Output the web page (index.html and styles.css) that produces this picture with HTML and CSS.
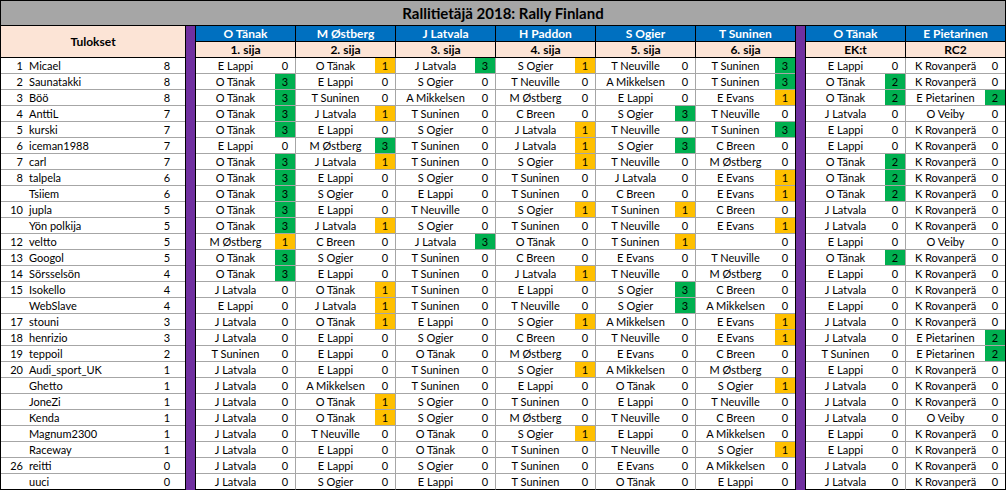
FILE: index.html
```html
<!DOCTYPE html>
<html lang="fi">
<head>
<meta charset="utf-8">
<title>Rallitietäjä 2018: Rally Finland</title>
<link rel="stylesheet" href="styles.css">
</head>
<body>
<div class="sheet">
  <div class="title">Rallitietäjä 2018: Rally Finland</div>
  <div class="grid">
    <div class="pu pu1"></div>
    <div class="pu pu2"></div>
    <div class="r h1">
      <div class="th">Tulokset</div>
      <div class="hb">O Tänak</div>
      <div class="hb">M Østberg</div>
      <div class="hb">J Latvala</div>
      <div class="hb">H Paddon</div>
      <div class="hb">S Ogier</div>
      <div class="hb">T Suninen</div>
      <div class="hb">O Tänak</div>
      <div class="hb">E Pietarinen</div>
    </div>
    <div class="r h2">
      <div class="hp">1. sija</div>
      <div class="hp">2. sija</div>
      <div class="hp">3. sija</div>
      <div class="hp">4. sija</div>
      <div class="hp">5. sija</div>
      <div class="hp">6. sija</div>
      <div class="hp">EK:t</div>
      <div class="hp">RC2</div>
    </div>

    <div class="r"><div class="t"><span class="rk">1</span><span class="nm">Micael</span><span class="pt">8</span></div>
      <div class="c"><span class="n">E Lappi</span><span class="s">0</span></div>
      <div class="c"><span class="n">O Tänak</span><span class="s o">1</span></div>
      <div class="c"><span class="n">J Latvala</span><span class="s g">3</span></div>
      <div class="c"><span class="n">S Ogier</span><span class="s o">1</span></div>
      <div class="c"><span class="n">T Neuville</span><span class="s">0</span></div>
      <div class="c"><span class="n">T Suninen</span><span class="s g">3</span></div>
      <div class="c"><span class="n">E Lappi</span><span class="s">0</span></div>
      <div class="c"><span class="n">K Rovanperä</span><span class="s">0</span></div>
    </div>
    <div class="r"><div class="t"><span class="rk">2</span><span class="nm">Saunatakki</span><span class="pt">8</span></div>
      <div class="c"><span class="n">O Tänak</span><span class="s g">3</span></div>
      <div class="c"><span class="n">E Lappi</span><span class="s">0</span></div>
      <div class="c"><span class="n">S Ogier</span><span class="s">0</span></div>
      <div class="c"><span class="n">T Neuville</span><span class="s">0</span></div>
      <div class="c"><span class="n">A Mikkelsen</span><span class="s">0</span></div>
      <div class="c"><span class="n">T Suninen</span><span class="s g">3</span></div>
      <div class="c"><span class="n">O Tänak</span><span class="s g">2</span></div>
      <div class="c"><span class="n">K Rovanperä</span><span class="s">0</span></div>
    </div>
    <div class="r"><div class="t"><span class="rk">3</span><span class="nm">Böö</span><span class="pt">8</span></div>
      <div class="c"><span class="n">O Tänak</span><span class="s g">3</span></div>
      <div class="c"><span class="n">T Suninen</span><span class="s">0</span></div>
      <div class="c"><span class="n">A Mikkelsen</span><span class="s">0</span></div>
      <div class="c"><span class="n">M Østberg</span><span class="s">0</span></div>
      <div class="c"><span class="n">E Lappi</span><span class="s">0</span></div>
      <div class="c"><span class="n">E Evans</span><span class="s o">1</span></div>
      <div class="c"><span class="n">O Tänak</span><span class="s g">2</span></div>
      <div class="c"><span class="n">E Pietarinen</span><span class="s g">2</span></div>
    </div>
    <div class="r"><div class="t"><span class="rk">4</span><span class="nm">AnttiL</span><span class="pt">7</span></div>
      <div class="c"><span class="n">O Tänak</span><span class="s g">3</span></div>
      <div class="c"><span class="n">J Latvala</span><span class="s o">1</span></div>
      <div class="c"><span class="n">T Suninen</span><span class="s">0</span></div>
      <div class="c"><span class="n">C Breen</span><span class="s">0</span></div>
      <div class="c"><span class="n">S Ogier</span><span class="s g">3</span></div>
      <div class="c"><span class="n">T Neuville</span><span class="s">0</span></div>
      <div class="c"><span class="n">J Latvala</span><span class="s">0</span></div>
      <div class="c"><span class="n">O Veiby</span><span class="s">0</span></div>
    </div>
    <div class="r"><div class="t"><span class="rk">5</span><span class="nm">kurski</span><span class="pt">7</span></div>
      <div class="c"><span class="n">O Tänak</span><span class="s g">3</span></div>
      <div class="c"><span class="n">E Lappi</span><span class="s">0</span></div>
      <div class="c"><span class="n">S Ogier</span><span class="s">0</span></div>
      <div class="c"><span class="n">J Latvala</span><span class="s o">1</span></div>
      <div class="c"><span class="n">T Neuville</span><span class="s">0</span></div>
      <div class="c"><span class="n">T Suninen</span><span class="s g">3</span></div>
      <div class="c"><span class="n">E Lappi</span><span class="s">0</span></div>
      <div class="c"><span class="n">K Rovanperä</span><span class="s">0</span></div>
    </div>
    <div class="r"><div class="t"><span class="rk">6</span><span class="nm">iceman1988</span><span class="pt">7</span></div>
      <div class="c"><span class="n">E Lappi</span><span class="s">0</span></div>
      <div class="c"><span class="n">M Østberg</span><span class="s g">3</span></div>
      <div class="c"><span class="n">T Suninen</span><span class="s">0</span></div>
      <div class="c"><span class="n">J Latvala</span><span class="s o">1</span></div>
      <div class="c"><span class="n">S Ogier</span><span class="s g">3</span></div>
      <div class="c"><span class="n">C Breen</span><span class="s">0</span></div>
      <div class="c"><span class="n">E Lappi</span><span class="s">0</span></div>
      <div class="c"><span class="n">K Rovanperä</span><span class="s">0</span></div>
    </div>
    <div class="r"><div class="t"><span class="rk">7</span><span class="nm">carl</span><span class="pt">7</span></div>
      <div class="c"><span class="n">O Tänak</span><span class="s g">3</span></div>
      <div class="c"><span class="n">J Latvala</span><span class="s o">1</span></div>
      <div class="c"><span class="n">T Suninen</span><span class="s">0</span></div>
      <div class="c"><span class="n">S Ogier</span><span class="s o">1</span></div>
      <div class="c"><span class="n">T Neuville</span><span class="s">0</span></div>
      <div class="c"><span class="n">M Østberg</span><span class="s">0</span></div>
      <div class="c"><span class="n">O Tänak</span><span class="s g">2</span></div>
      <div class="c"><span class="n">K Rovanperä</span><span class="s">0</span></div>
    </div>
    <div class="r"><div class="t"><span class="rk">8</span><span class="nm">talpela</span><span class="pt">6</span></div>
      <div class="c"><span class="n">O Tänak</span><span class="s g">3</span></div>
      <div class="c"><span class="n">E Lappi</span><span class="s">0</span></div>
      <div class="c"><span class="n">S Ogier</span><span class="s">0</span></div>
      <div class="c"><span class="n">T Suninen</span><span class="s">0</span></div>
      <div class="c"><span class="n">J Latvala</span><span class="s">0</span></div>
      <div class="c"><span class="n">E Evans</span><span class="s o">1</span></div>
      <div class="c"><span class="n">O Tänak</span><span class="s g">2</span></div>
      <div class="c"><span class="n">K Rovanperä</span><span class="s">0</span></div>
    </div>
    <div class="r"><div class="t"><span class="rk"></span><span class="nm">Tsiiem</span><span class="pt">6</span></div>
      <div class="c"><span class="n">O Tänak</span><span class="s g">3</span></div>
      <div class="c"><span class="n">S Ogier</span><span class="s">0</span></div>
      <div class="c"><span class="n">E Lappi</span><span class="s">0</span></div>
      <div class="c"><span class="n">T Suninen</span><span class="s">0</span></div>
      <div class="c"><span class="n">C Breen</span><span class="s">0</span></div>
      <div class="c"><span class="n">E Evans</span><span class="s o">1</span></div>
      <div class="c"><span class="n">O Tänak</span><span class="s g">2</span></div>
      <div class="c"><span class="n">K Rovanperä</span><span class="s">0</span></div>
    </div>
    <div class="r"><div class="t"><span class="rk">10</span><span class="nm">jupla</span><span class="pt">5</span></div>
      <div class="c"><span class="n">O Tänak</span><span class="s g">3</span></div>
      <div class="c"><span class="n">E Lappi</span><span class="s">0</span></div>
      <div class="c"><span class="n">T Neuville</span><span class="s">0</span></div>
      <div class="c"><span class="n">S Ogier</span><span class="s o">1</span></div>
      <div class="c"><span class="n">T Suninen</span><span class="s o">1</span></div>
      <div class="c"><span class="n">C Breen</span><span class="s">0</span></div>
      <div class="c"><span class="n">J Latvala</span><span class="s">0</span></div>
      <div class="c"><span class="n">K Rovanperä</span><span class="s">0</span></div>
    </div>
    <div class="r"><div class="t"><span class="rk"></span><span class="nm">Yön polkija</span><span class="pt">5</span></div>
      <div class="c"><span class="n">O Tänak</span><span class="s g">3</span></div>
      <div class="c"><span class="n">J Latvala</span><span class="s o">1</span></div>
      <div class="c"><span class="n">S Ogier</span><span class="s">0</span></div>
      <div class="c"><span class="n">T Suninen</span><span class="s">0</span></div>
      <div class="c"><span class="n">T Neuville</span><span class="s">0</span></div>
      <div class="c"><span class="n">E Evans</span><span class="s o">1</span></div>
      <div class="c"><span class="n">J Latvala</span><span class="s">0</span></div>
      <div class="c"><span class="n">K Rovanperä</span><span class="s">0</span></div>
    </div>
    <div class="r"><div class="t"><span class="rk">12</span><span class="nm">veltto</span><span class="pt">5</span></div>
      <div class="c"><span class="n">M Østberg</span><span class="s o">1</span></div>
      <div class="c"><span class="n">C Breen</span><span class="s">0</span></div>
      <div class="c"><span class="n">J Latvala</span><span class="s g">3</span></div>
      <div class="c"><span class="n">O Tänak</span><span class="s">0</span></div>
      <div class="c"><span class="n">T Suninen</span><span class="s o">1</span></div>
      <div class="c"><span class="n"></span><span class="s">0</span></div>
      <div class="c"><span class="n">E Lappi</span><span class="s">0</span></div>
      <div class="c"><span class="n">O Veiby</span><span class="s">0</span></div>
    </div>
    <div class="r"><div class="t"><span class="rk">13</span><span class="nm">Googol</span><span class="pt">5</span></div>
      <div class="c"><span class="n">O Tänak</span><span class="s g">3</span></div>
      <div class="c"><span class="n">S Ogier</span><span class="s">0</span></div>
      <div class="c"><span class="n">T Suninen</span><span class="s">0</span></div>
      <div class="c"><span class="n">C Breen</span><span class="s">0</span></div>
      <div class="c"><span class="n">E Evans</span><span class="s">0</span></div>
      <div class="c"><span class="n">T Neuville</span><span class="s">0</span></div>
      <div class="c"><span class="n">O Tänak</span><span class="s g">2</span></div>
      <div class="c"><span class="n">K Rovanperä</span><span class="s">0</span></div>
    </div>
    <div class="r"><div class="t"><span class="rk">14</span><span class="nm">Sörsselsön</span><span class="pt">4</span></div>
      <div class="c"><span class="n">O Tänak</span><span class="s g">3</span></div>
      <div class="c"><span class="n">E Lappi</span><span class="s">0</span></div>
      <div class="c"><span class="n">T Suninen</span><span class="s">0</span></div>
      <div class="c"><span class="n">J Latvala</span><span class="s o">1</span></div>
      <div class="c"><span class="n">T Neuville</span><span class="s">0</span></div>
      <div class="c"><span class="n">M Østberg</span><span class="s">0</span></div>
      <div class="c"><span class="n">E Lappi</span><span class="s">0</span></div>
      <div class="c"><span class="n">K Rovanperä</span><span class="s">0</span></div>
    </div>
    <div class="r"><div class="t"><span class="rk">15</span><span class="nm">Isokello</span><span class="pt">4</span></div>
      <div class="c"><span class="n">J Latvala</span><span class="s">0</span></div>
      <div class="c"><span class="n">O Tänak</span><span class="s o">1</span></div>
      <div class="c"><span class="n">T Suninen</span><span class="s">0</span></div>
      <div class="c"><span class="n">E Lappi</span><span class="s">0</span></div>
      <div class="c"><span class="n">S Ogier</span><span class="s g">3</span></div>
      <div class="c"><span class="n">C Breen</span><span class="s">0</span></div>
      <div class="c"><span class="n">J Latvala</span><span class="s">0</span></div>
      <div class="c"><span class="n">K Rovanperä</span><span class="s">0</span></div>
    </div>
    <div class="r"><div class="t"><span class="rk"></span><span class="nm">WebSlave</span><span class="pt">4</span></div>
      <div class="c"><span class="n">E Lappi</span><span class="s">0</span></div>
      <div class="c"><span class="n">J Latvala</span><span class="s o">1</span></div>
      <div class="c"><span class="n">T Suninen</span><span class="s">0</span></div>
      <div class="c"><span class="n">T Neuville</span><span class="s">0</span></div>
      <div class="c"><span class="n">S Ogier</span><span class="s g">3</span></div>
      <div class="c"><span class="n">A Mikkelsen</span><span class="s">0</span></div>
      <div class="c"><span class="n">E Lappi</span><span class="s">0</span></div>
      <div class="c"><span class="n">K Rovanperä</span><span class="s">0</span></div>
    </div>
    <div class="r"><div class="t"><span class="rk">17</span><span class="nm">stouni</span><span class="pt">3</span></div>
      <div class="c"><span class="n">J Latvala</span><span class="s">0</span></div>
      <div class="c"><span class="n">O Tänak</span><span class="s o">1</span></div>
      <div class="c"><span class="n">E Lappi</span><span class="s">0</span></div>
      <div class="c"><span class="n">S Ogier</span><span class="s o">1</span></div>
      <div class="c"><span class="n">A Mikkelsen</span><span class="s">0</span></div>
      <div class="c"><span class="n">E Evans</span><span class="s o">1</span></div>
      <div class="c"><span class="n">J Latvala</span><span class="s">0</span></div>
      <div class="c"><span class="n">K Rovanperä</span><span class="s">0</span></div>
    </div>
    <div class="r"><div class="t"><span class="rk">18</span><span class="nm">henrizio</span><span class="pt">3</span></div>
      <div class="c"><span class="n">J Latvala</span><span class="s">0</span></div>
      <div class="c"><span class="n">E Lappi</span><span class="s">0</span></div>
      <div class="c"><span class="n">S Ogier</span><span class="s">0</span></div>
      <div class="c"><span class="n">C Breen</span><span class="s">0</span></div>
      <div class="c"><span class="n">T Neuville</span><span class="s">0</span></div>
      <div class="c"><span class="n">E Evans</span><span class="s o">1</span></div>
      <div class="c"><span class="n">J Latvala</span><span class="s">0</span></div>
      <div class="c"><span class="n">E Pietarinen</span><span class="s g">2</span></div>
    </div>
    <div class="r"><div class="t"><span class="rk">19</span><span class="nm">teppoil</span><span class="pt">2</span></div>
      <div class="c"><span class="n">T Suninen</span><span class="s">0</span></div>
      <div class="c"><span class="n">E Lappi</span><span class="s">0</span></div>
      <div class="c"><span class="n">O Tänak</span><span class="s">0</span></div>
      <div class="c"><span class="n">M Østberg</span><span class="s">0</span></div>
      <div class="c"><span class="n">E Evans</span><span class="s">0</span></div>
      <div class="c"><span class="n">C Breen</span><span class="s">0</span></div>
      <div class="c"><span class="n">T Suninen</span><span class="s">0</span></div>
      <div class="c"><span class="n">E Pietarinen</span><span class="s g">2</span></div>
    </div>
    <div class="r"><div class="t"><span class="rk">20</span><span class="nm">Audi_sport_UK</span><span class="pt">1</span></div>
      <div class="c"><span class="n">J Latvala</span><span class="s">0</span></div>
      <div class="c"><span class="n">E Lappi</span><span class="s">0</span></div>
      <div class="c"><span class="n">T Suninen</span><span class="s">0</span></div>
      <div class="c"><span class="n">S Ogier</span><span class="s o">1</span></div>
      <div class="c"><span class="n">A Mikkelsen</span><span class="s">0</span></div>
      <div class="c"><span class="n">M Østberg</span><span class="s">0</span></div>
      <div class="c"><span class="n">E Lappi</span><span class="s">0</span></div>
      <div class="c"><span class="n">K Rovanperä</span><span class="s">0</span></div>
    </div>
    <div class="r"><div class="t"><span class="rk"></span><span class="nm">Ghetto</span><span class="pt">1</span></div>
      <div class="c"><span class="n">J Latvala</span><span class="s">0</span></div>
      <div class="c"><span class="n">A Mikkelsen</span><span class="s">0</span></div>
      <div class="c"><span class="n">T Suninen</span><span class="s">0</span></div>
      <div class="c"><span class="n">E Lappi</span><span class="s">0</span></div>
      <div class="c"><span class="n">O Tänak</span><span class="s">0</span></div>
      <div class="c"><span class="n">S Ogier</span><span class="s o">1</span></div>
      <div class="c"><span class="n">J Latvala</span><span class="s">0</span></div>
      <div class="c"><span class="n">K Rovanperä</span><span class="s">0</span></div>
    </div>
    <div class="r"><div class="t"><span class="rk"></span><span class="nm">JoneZi</span><span class="pt">1</span></div>
      <div class="c"><span class="n">J Latvala</span><span class="s">0</span></div>
      <div class="c"><span class="n">O Tänak</span><span class="s o">1</span></div>
      <div class="c"><span class="n">S Ogier</span><span class="s">0</span></div>
      <div class="c"><span class="n">T Suninen</span><span class="s">0</span></div>
      <div class="c"><span class="n">E Lappi</span><span class="s">0</span></div>
      <div class="c"><span class="n">T Neuville</span><span class="s">0</span></div>
      <div class="c"><span class="n">J Latvala</span><span class="s">0</span></div>
      <div class="c"><span class="n">K Rovanperä</span><span class="s">0</span></div>
    </div>
    <div class="r"><div class="t"><span class="rk"></span><span class="nm">Kenda</span><span class="pt">1</span></div>
      <div class="c"><span class="n">J Latvala</span><span class="s">0</span></div>
      <div class="c"><span class="n">O Tänak</span><span class="s o">1</span></div>
      <div class="c"><span class="n">S Ogier</span><span class="s">0</span></div>
      <div class="c"><span class="n">M Østberg</span><span class="s">0</span></div>
      <div class="c"><span class="n">T Neuville</span><span class="s">0</span></div>
      <div class="c"><span class="n">C Breen</span><span class="s">0</span></div>
      <div class="c"><span class="n">J Latvala</span><span class="s">0</span></div>
      <div class="c"><span class="n">O Veiby</span><span class="s">0</span></div>
    </div>
    <div class="r"><div class="t"><span class="rk"></span><span class="nm">Magnum2300</span><span class="pt">1</span></div>
      <div class="c"><span class="n">J Latvala</span><span class="s">0</span></div>
      <div class="c"><span class="n">T Neuville</span><span class="s">0</span></div>
      <div class="c"><span class="n">O Tänak</span><span class="s">0</span></div>
      <div class="c"><span class="n">S Ogier</span><span class="s o">1</span></div>
      <div class="c"><span class="n">E Lappi</span><span class="s">0</span></div>
      <div class="c"><span class="n">A Mikkelsen</span><span class="s">0</span></div>
      <div class="c"><span class="n">E Lappi</span><span class="s">0</span></div>
      <div class="c"><span class="n">K Rovanperä</span><span class="s">0</span></div>
    </div>
    <div class="r"><div class="t"><span class="rk"></span><span class="nm">Raceway</span><span class="pt">1</span></div>
      <div class="c"><span class="n">J Latvala</span><span class="s">0</span></div>
      <div class="c"><span class="n">E Lappi</span><span class="s">0</span></div>
      <div class="c"><span class="n">O Tänak</span><span class="s">0</span></div>
      <div class="c"><span class="n">T Suninen</span><span class="s">0</span></div>
      <div class="c"><span class="n">T Neuville</span><span class="s">0</span></div>
      <div class="c"><span class="n">S Ogier</span><span class="s o">1</span></div>
      <div class="c"><span class="n">E Lappi</span><span class="s">0</span></div>
      <div class="c"><span class="n">K Rovanperä</span><span class="s">0</span></div>
    </div>
    <div class="r"><div class="t"><span class="rk">26</span><span class="nm">reitti</span><span class="pt">0</span></div>
      <div class="c"><span class="n">J Latvala</span><span class="s">0</span></div>
      <div class="c"><span class="n">E Lappi</span><span class="s">0</span></div>
      <div class="c"><span class="n">S Ogier</span><span class="s">0</span></div>
      <div class="c"><span class="n">T Suninen</span><span class="s">0</span></div>
      <div class="c"><span class="n">E Evans</span><span class="s">0</span></div>
      <div class="c"><span class="n">A Mikkelsen</span><span class="s">0</span></div>
      <div class="c"><span class="n">J Latvala</span><span class="s">0</span></div>
      <div class="c"><span class="n">K Rovanperä</span><span class="s">0</span></div>
    </div>
    <div class="r"><div class="t"><span class="rk"></span><span class="nm">uuci</span><span class="pt">0</span></div>
      <div class="c"><span class="n">J Latvala</span><span class="s">0</span></div>
      <div class="c"><span class="n">S Ogier</span><span class="s">0</span></div>
      <div class="c"><span class="n">E Lappi</span><span class="s">0</span></div>
      <div class="c"><span class="n">T Suninen</span><span class="s">0</span></div>
      <div class="c"><span class="n">O Tänak</span><span class="s">0</span></div>
      <div class="c"><span class="n">E Lappi</span><span class="s">0</span></div>
      <div class="c"><span class="n">J Latvala</span><span class="s">0</span></div>
      <div class="c"><span class="n">K Rovanperä</span><span class="s">0</span></div>
    </div>
  </div>
</div>
</body>
</html>
```

FILE: styles.css
```css
html, body {
  margin: 0;
  padding: 0;
  background: #ffffff;
}

body {
  font-family: Lato, "Open Sans", "DejaVu Sans", sans-serif;
  color: #000000;
}

.sheet {
  width: 1006px;
  box-sizing: border-box;
  border-top: 1px solid #000;
  border-left: 1px solid #000;
  border-right: 1px solid #000;
}

.title {
  height: 24px;
  border-bottom: 1px solid #000;
  background: #a6a6a6;
  display: flex;
  align-items: center;
  justify-content: center;
  font-weight: 700;
  font-size: 15px;
}

.grid {
  display: grid;
  grid-template-columns: 184px 11px repeat(5, 100px) 99px 11px 100px 99px;
  grid-template-rows: repeat(29, 16px);
}

.r {
  display: contents;
}

.pu {
  grid-row: 1 / -1;
  background: #7030a0;
  border-left: 1px solid #000;
  border-right: 1px solid #000;
}

.pu1 { grid-column: 2; }
.pu2 { grid-column: 9; }

.th {
  grid-column: 1;
  grid-row: 1 / span 2;
  background: #fce4d6;
  border-bottom: 1px solid #000;
  display: flex;
  align-items: center;
  justify-content: center;
  font-weight: 700;
  font-size: 12px;
}

.hb,
.hp {
  border-right: 1px solid #000;
  border-bottom: 1px solid #000;
  display: flex;
  align-items: center;
  justify-content: center;
  font-weight: 700;
  font-size: 12px;
  line-height: 15px;
}

.hb {
  background: #0070c0;
  color: #ffffff;
}

.hp {
  background: #fce4d6;
  color: #000;
}

.h1 > :nth-child(7),
.h1 > :nth-child(9),
.h2 > :nth-child(6),
.h2 > :nth-child(8) {
  border-right: none;
}

.t {
  display: flex;
  border-bottom: 1px solid #a6a6a6;
  font-size: 11px;
  line-height: 15px;
}

.rk {
  width: 22px;
  text-align: right;
}

.nm {
  flex: 1;
  padding-left: 6px;
  white-space: nowrap;
}

.pt {
  width: 36px;
  text-align: center;
}

.c {
  display: flex;
  border-right: 1px solid #a6a6a6;
  border-bottom: 1px solid #a6a6a6;
  font-size: 11px;
  line-height: 15px;
}

.r > .c:nth-child(7),
.r > .c:nth-child(9) {
  border-right: none;
}

.c .n {
  flex: 1;
  text-align: center;
  white-space: nowrap;
  overflow: hidden;
}

.c .s {
  width: 20px;
  text-align: center;
}

.s.g { background: #00b050; }
.s.o { background: #ffc000; }

.r:last-child > .t,
.r:last-child > .c {
  border-bottom-color: #000;
}
```
